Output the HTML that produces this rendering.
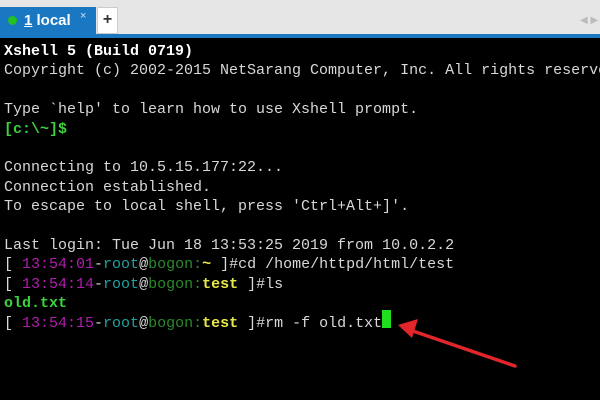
<!DOCTYPE html><html><head><style>
body{margin:0;width:600px;height:400px;background:#000;overflow:hidden;position:relative;font-family:"Liberation Mono",monospace}
#bar{position:absolute;left:0;top:0;width:600px;height:34px;background:#e6e6e6}
#line{position:absolute;left:0;top:34px;width:600px;height:4px;background:#1a78c2}
#tab{position:absolute;left:0;top:7px;width:96px;height:28px;background:#1a78c2;color:#fff;font:bold 15px "Liberation Sans",sans-serif}
#plus{position:absolute;left:97px;top:7px;width:21px;height:27px;background:#fff;border:1px solid #ccc;box-sizing:border-box;text-align:center;font:bold 16px "Liberation Sans",sans-serif;line-height:24px;color:#333}
pre{position:absolute;left:4px;top:42px;margin:0;font:15px/19.4px "Liberation Mono",monospace;color:#d8d8d8}
b{font-weight:bold}
.m{color:#b21cb2}.t{color:#22a0a0}.g{color:#2a8a2a}.y{color:#e8e84a;font-weight:bold}.G{color:#3cd23c;font-weight:bold}
</style></head><body>
<div id="bar"></div><div id="line"></div>
<div id="tab"><span style="position:absolute;left:8px;top:9px;width:9px;height:9px;border-radius:50%;background:#22c022"></span><span style="position:absolute;left:24px;top:5px"><u>1</u> local</span><span style="position:absolute;left:80px;top:3px;font-weight:normal;font-size:11px;color:#cfe2f3">×</span></div>
<div id="plus">+</div>
<div style="position:absolute;left:580px;top:15px;color:#bbb;font-size:10px;font-family:'Liberation Sans'">◀ ▶</div>
<pre><b style="color:#fff">Xshell 5 (Build 0719)</b>
Copyright (c) 2002-2015 NetSarang Computer, Inc. All rights reserved.

Type `help' to learn how to use Xshell prompt.
<span class="G">[c:\~]$</span>

Connecting to 10.5.15.177:22...
Connection established.
To escape to local shell, press 'Ctrl+Alt+]'.

Last login: Tue Jun 18 13:53:25 2019 from 10.0.2.2
[ <span class="m">13:54:01</span>-<span class="t">root</span>@<span class="g">bogon:</span><span class="y">~</span> ]#cd /home/httpd/html/test
[ <span class="m">13:54:14</span>-<span class="t">root</span>@<span class="g">bogon:</span><span class="y">test</span> ]#ls
<span class="G">old.txt</span>
[ <span class="m">13:54:15</span>-<span class="t">root</span>@<span class="g">bogon:</span><span class="y">test</span> ]#rm -f old.txt</pre>
<div style="position:absolute;left:382px;top:310px;width:9px;height:18px;background:#1ee01e"></div>
<svg style="position:absolute;left:0;top:0" width="600" height="400"><line x1="515" y1="366" x2="410" y2="330" stroke="#e0262a" stroke-width="3.5" stroke-linecap="round"/><polygon points="398,325 418,319 412,338" fill="#e0262a"/></svg>
</body></html>
